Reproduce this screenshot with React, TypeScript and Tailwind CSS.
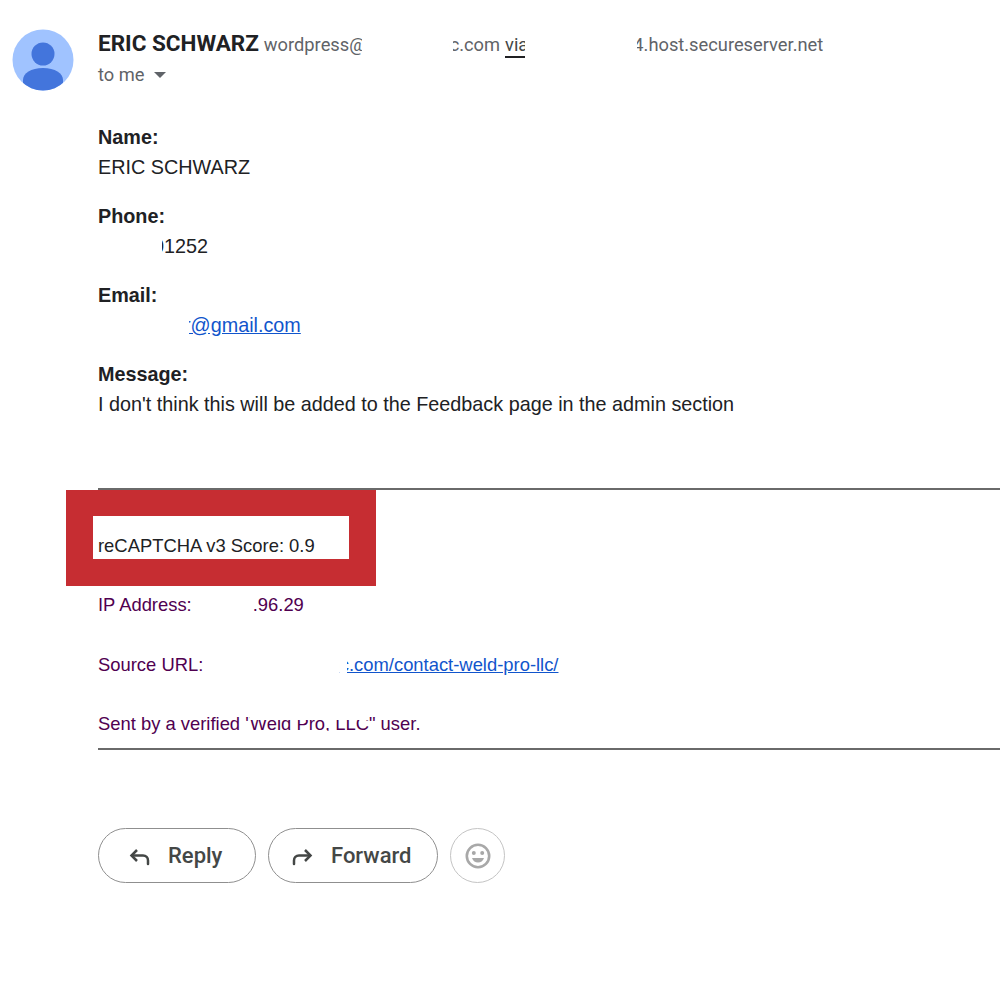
const Avatar = () => (
  <svg width="62" height="62" viewBox="0 0 62 62" className="shrink-0">
    <clipPath id="avatar-clip">
      <circle cx="31" cy="31" r="30.5" />
    </clipPath>
    <circle cx="31" cy="31" r="30.5" fill="#a0c3ff" />
    <g clipPath="url(#avatar-clip)">
      <circle cx="31" cy="25" r="11.5" fill="#4375dc" />
      <path d="M11 51c0-7 8-12 20-12s20 5 20 12v12H11z" fill="#4375dc" />
    </g>
  </svg>
);

const ReplyIcon = () => (
  <svg width="24" height="24" viewBox="0 0 24 24" fill="none" stroke="#444746" strokeWidth="2.5">
    <path d="M9 6 3.500 11.500 9 17" />
    <path d="M4 11.500h11c3 0 5 2 5 5V20" strokeLinecap="round" />
  </svg>
);

const ForwardIcon = () => (
  <svg width="24" height="24" viewBox="0 0 24 24" fill="none" stroke="#444746" strokeWidth="2.5">
    <path d="M15 6l5.500 5.500L15 17" />
    <path d="M20 11.500H9c-3 0-5 2-5 5V20" strokeLinecap="round" />
  </svg>
);

const SmileIcon = () => (
  <svg width="28" height="28" viewBox="0 0 28 28">
    <circle cx="14" cy="14" r="11.200" fill="none" stroke="#a8a8a8" strokeWidth="2.600" />
    <circle cx="9.800" cy="11" r="2" fill="#a8a8a8" />
    <circle cx="18.200" cy="11" r="2" fill="#a8a8a8" />
    <path d="M8 16h12c-1 3-3.300 4.500-6 4.500S9 19 8 16z" fill="#a8a8a8" />
  </svg>
);

const Field = ({ label, children }: { label: string; children: React.ReactNode }) => (
  <div className="mb-[20px] text-[19.800px] leading-[29.500px] text-[#202124]">
    <div className="font-bold">{label}</div>
    <div>{children}</div>
  </div>
);

// white patch for the parts that were blanked out in the screenshot
const Blank = ({ className }: { className: string }) => (
  <span className={`absolute bg-white ${className}`} />
);

export default function App() {
  return (
    <div className="min-h-[1000px] w-[1000px] overflow-hidden bg-white font-['Liberation_Sans',Arial,sans-serif]">
      <header className="flex pl-[12px] pt-[29px]">
        <Avatar />
        <div className="ml-[24px] font-['Roboto',sans-serif] text-[#5f6368]">
          <div className="flex h-[32px] items-baseline whitespace-nowrap text-[18.300px] leading-[28px]">
            <span className="text-[22.500px] font-bold text-[#202124]">ERIC SCHWARZ</span>
            <span className="relative ml-[5px]">
              wordpress@
              <Blank className="inset-y-0 right-0 w-[4px]" />
            </span>
            <span className="relative ml-[84px]">
              c.com
              <Blank className="inset-y-0 left-0 w-[3.500px]" />
            </span>
            <span className="relative ml-[5px] border-b-2 border-[#202124] leading-[22px] text-[#444746]">
              via
              <Blank className="-bottom-[2px] right-0 top-0 w-[3px]" />
            </span>
            <span className="relative ml-[105px]">
              4.host.secureserver.net
              <Blank className="inset-y-0 left-0 w-[4px]" />
            </span>
          </div>
          <div className="flex h-[28px] items-center text-[18.300px]">
            to me
            <span className="ml-[9px] h-0 w-0 border-x-[6.500px] border-t-[6.500px] border-x-transparent border-t-[#5f6368]" />
          </div>
        </div>
      </header>

      <main className="pl-[98px] pt-[32px]">
        <Field label="Name:">ERIC SCHWARZ</Field>
        <Field label="Phone:">
          <span className="relative ml-[55px]">
            01252
            <Blank className="inset-y-0 left-0 w-[9px]" />
          </span>
        </Field>
        <Field label="Email:">
          <a href="#" className="relative ml-[86px] text-[#1155cc] underline">
            r@gmail.com
            <Blank className="inset-y-0 left-0 w-[4.500px]" />
          </a>
        </Field>
        <Field label="Message:">
          I don't think this will be added to the Feedback page in the admin section
        </Field>

        <hr className="mt-[69px] border-t-2 border-[#6a6a6a]" />

        <div className="-ml-[32px] flex h-[96px] w-[310px] items-end border-x-[27px] border-b-[27px] border-t-[26px] border-[#c62d32] bg-white pl-[5px] text-[18.400px] leading-[26px] text-[#202124]">
          reCAPTCHA v3 Score: 0.9
        </div>

        <div className="text-[18.400px] leading-[26px] text-[#500050]">
          <div className="mt-[6px]">
            IP Address:<span className="ml-[61px]">.96.29</span>
          </div>
          <div className="mt-[34px]">
            Source URL:
            <a href="#" className="relative ml-[136.500px] text-[#1155cc] underline">
              c.com/contact-weld-pro-llc/
              <Blank className="inset-y-0 left-0 w-[7px]" />
            </a>
          </div>
          <div className="mt-[33px]">
            Sent by a verified '
            <span className="relative ml-[1px] inline-block">
              Weld Pro, LLC
              <Blank className="inset-x-0 top-0 h-[9px]" />
              <Blank className="inset-x-0 bottom-0 h-[6px]" />
            </span>
            " user.
          </div>
        </div>

        <hr className="mt-[11px] border-t-2 border-[#6a6a6a]" />

        <div className="mt-[78px] flex items-center gap-[12px] font-['Roboto',sans-serif] text-[22px] font-medium text-[#444746]">
          <button className="flex h-[55px] w-[158px] items-center gap-[16px] rounded-full border border-[#8f8f8f] pl-[29px]">
            <ReplyIcon />
            Reply
          </button>
          <button className="flex h-[55px] w-[170px] items-center gap-[17px] rounded-full border border-[#8f8f8f] pl-[21px]">
            <ForwardIcon />
            Forward
          </button>
          <button className="flex h-[55px] w-[55px] items-center justify-center rounded-full border border-[#c4c4c4]">
            <SmileIcon />
          </button>
        </div>
      </main>
    </div>
  );
}
